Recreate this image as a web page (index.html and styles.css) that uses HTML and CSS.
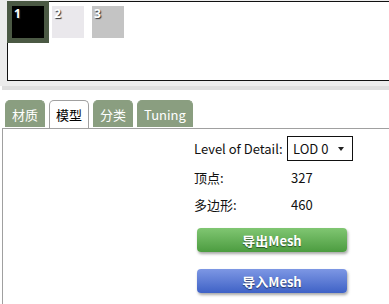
FILE: index.html
```html
<!DOCTYPE html>
<html lang="zh">
<head>
  <meta charset="UTF-8" />
  <title>Mesh</title>
  <link rel="stylesheet" href="styles.css">
</head>
<body>

  <div class="top">
    <div class="gallery">
      <div class="thumb thumb-black selected">1</div>
      <div class="thumb thumb-light">2</div>
      <div class="thumb thumb-gray">3</div>
    </div>
  </div>
  <div class="band"></div>

  <div class="tabs">
    <div class="tab">材质</div>
    <div class="tab active">模型</div>
    <div class="tab">分类</div>
    <div class="tab">Tuning</div>
  </div>

  <div class="pane">
    <div class="props">
      <div class="label">Level of Detail:</div>
      <div class="select">LOD 0 <span class="arrow"></span></div>
      <div class="label">顶点:</div>
      <div class="value">327</div>
      <div class="label">多边形:</div>
      <div class="value">460</div>
    </div>
    <button class="btn btn-green">导出Mesh</button>
    <button class="btn btn-blue">导入Mesh</button>
  </div>

</body>
</html>
```

FILE: styles.css
```css
body {
  margin: 0;
  background: #fff;
  font-family: "Noto Sans CJK SC", "Noto Sans", sans-serif;
  font-size: 13px;
  color: #111;
  overflow: hidden;
}
.top {
  background: #ececec;
  padding: 1px 0 5px 7px;
}
.gallery {
  display: flex;
  gap: 8px;
  height: 80px;
  box-sizing: border-box;
  margin-right: -2px;
  padding: 4px;
  background: #fff;
  border: 1px solid #111;
}
.thumb {
  width: 32px;
  height: 32px;
  padding: 1px 2px;
  box-sizing: border-box;
  font-family: "Open Sans", sans-serif;
  font-size: 12px;
  font-weight: bold;
  line-height: 14px;
  color: #fff;
  text-shadow: 1px 1px 1px #333;
}
.thumb-black { background: #000; }
.thumb-light { background: #eae8ec; }
.thumb-gray { background: #c4c4c4; }
.thumb.selected {
  outline: 5px solid #4b5944;
}
.band {
  height: 4px;
  margin-left: 2px;
  background: #dedede;
}
.tabs {
  display: flex;
  gap: 4px;
  margin: 10px 0 0 5px;
  position: relative;
  z-index: 1;
}
.tab {
  height: 27px;
  line-height: 27px;
  padding: 0 6px;
  box-sizing: border-box;
  border: 1px solid #8a9e80;
  border-bottom: none;
  border-radius: 5px 5px 0 0;
  background: #8a9e80;
  color: #fff;
  font-size: 13px;
}
.tab.active {
  height: 28px;
  background: #fff;
  border-color: #a0a0a0;
  color: #000;
}
.pane {
  margin-left: 2px;
  height: 170px;
  padding: 7px 0 0 191px;
  border-top: 1px solid #a0a0a0;
  border-left: 1px solid #a0a0a0;
}
.props {
  display: grid;
  grid-template-columns: 93px 66px;
  grid-template-rows: 25px 22px 22px;
  row-gap: 5px;
  align-items: center;
}
.value {
  padding-left: 4px;
}
.select {
  height: 25px;
  box-sizing: border-box;
  padding-left: 5px;
  border: 1px solid #111;
  display: flex;
  align-items: center;
  justify-content: space-between;
  padding-right: 8px;
}
.arrow {
  border-left: 3px solid transparent;
  border-right: 3px solid transparent;
  border-top: 4px solid #222;
}
.btn {
  display: block;
  width: 150px;
  height: 24px;
  margin: 13px 0 0 3px;
  border: none;
  border-radius: 4px;
  font-family: "Noto Sans CJK SC", sans-serif;
  font-size: 13px;
  font-weight: bold;
  color: #fff;
  text-shadow: 0 1px 1px rgba(0,0,0,0.5);
  box-shadow: 1px 2px 3px rgba(0,0,0,0.35);
}
.btn-green {
  background: linear-gradient(#80c672, #4c9c40);
}
.btn-blue {
  margin-top: 17px;
  background: linear-gradient(#7d97e4, #3f62c6);
}
```
